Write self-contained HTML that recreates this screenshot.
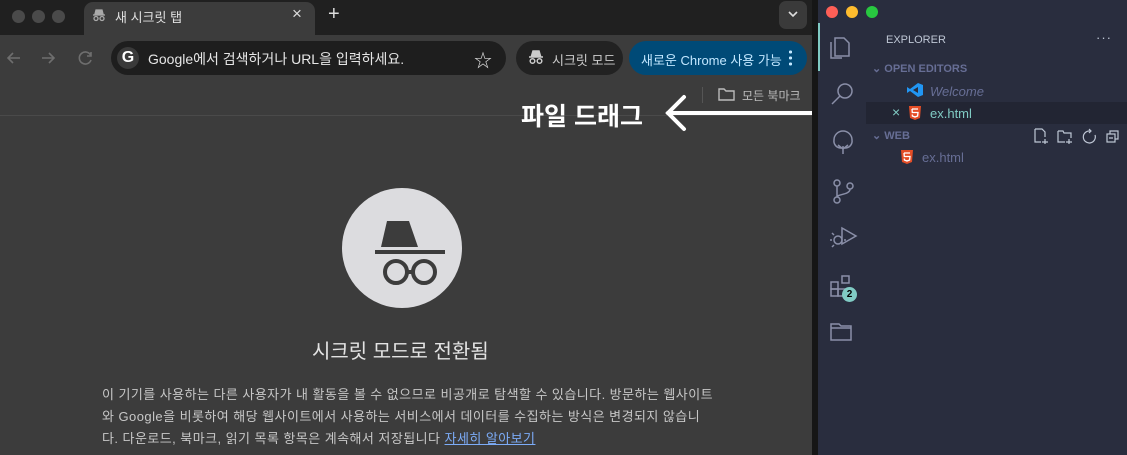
<!DOCTYPE html>
<html><head><meta charset="utf-8"><style>
*{margin:0;padding:0;box-sizing:border-box}
body{width:1127px;height:455px;overflow:hidden;background:#3c3c3c;font-family:"Liberation Sans","Noto Sans CJK KR",sans-serif;position:relative}
.abs{position:absolute}
.k{font-family:"Liberation Sans","Noto Sans CJK KR",sans-serif;white-space:nowrap}
</style></head><body>
<div class="abs" style="left:0;top:0;width:812px;height:35px;background:#202020"></div>
<div class="abs" style="left:12px;top:10px;width:13px;height:13px;border-radius:50%;background:#4a4a4a"></div>
<div class="abs" style="left:32px;top:10px;width:13px;height:13px;border-radius:50%;background:#4a4a4a"></div>
<div class="abs" style="left:52px;top:10px;width:13px;height:13px;border-radius:50%;background:#4a4a4a"></div>
<div class="abs" style="left:84px;top:2px;width:231px;height:34px;background:#3c3c3c;border-radius:9px 9px 0 0"></div>
<svg class="abs" style="left:92px;top:8px" width="14" height="14" viewBox="0 0 14 14" fill="none" stroke="#aaa" stroke-width="1.3"><path d="M4 2h6l1 4H3z" fill="#aaa"/><path d="M1 7h12"/><circle cx="4" cy="10.5" r="2"/><circle cx="10" cy="10.5" r="2"/></svg>
<div class="abs k" style="left:115px;top:7px;font-size:13px;color:#e0e0e0">새 시크릿 탭</div>
<div class="abs" style="left:292px;top:4px;font-size:17px;color:#ddd">×</div>
<div class="abs" style="left:328px;top:3px;font-size:20px;color:#ddd">+</div>
<div class="abs" style="left:779px;top:1px;width:28px;height:28px;border-radius:7px;background:#3a3a3a"></div>
<svg class="abs" style="left:787px;top:9px" width="12" height="10"><path d="M2 3l4 4 4-4" stroke="#ddd" stroke-width="1.6" fill="none"/></svg>
<svg class="abs" style="left:6px;top:50px" width="90" height="16" fill="none" stroke="#6e6e6e" stroke-width="1.6"><path d="M14 8H2M7 3L2 8l5 5"/><path d="M36 8h12M43 3l5 5-5 5"/><path d="M85 6a6 6 0 1 0 0 4M85 2v4h-4"/></svg>
<div class="abs" style="left:111px;top:41px;width:395px;height:34px;border-radius:17px;background:#1e1e1e"></div>
<div class="abs" style="left:117px;top:47px;width:22px;height:22px;border-radius:50%;background:#3a3a3a;color:#fff;font-weight:bold;font-size:16px;text-align:center;line-height:22px">G</div>
<div class="abs k" style="left:148px;top:49px;font-size:14px;color:#e6e6e6">Google에서 검색하거나 URL을 입력하세요.</div>
<div class="abs" style="left:474px;top:47px;font-size:18px;color:#ddd">☆</div>
<div class="abs" style="left:516px;top:41px;width:107px;height:34px;border-radius:17px;background:#222"></div>
<svg class="abs" style="left:528px;top:50px" width="16" height="15" fill="none" stroke="#ccc" stroke-width="1.5"><path d="M5 1h6l1.5 5h-9z" fill="#ccc"/><path d="M1 7h14"/><circle cx="4.5" cy="11" r="2.3"/><circle cx="11.5" cy="11" r="2.3"/></svg>
<div class="abs k" style="left:552px;top:50px;font-size:13px;color:#ccc">시크릿 모드</div>
<div class="abs" style="left:629px;top:41px;width:178px;height:34px;border-radius:17px;background:#004a77"></div>
<div class="abs k" style="left:641px;top:50px;font-size:13px;color:#c2e7ff">새로운 Chrome 사용 가능</div>
<div class="abs" style="left:789px;top:49px;width:3px;height:18px;background:radial-gradient(circle,#c2e7ff 1.5px,transparent 1.6px) 0 0/3px 6px"></div>
<div class="abs" style="left:702px;top:87px;width:1px;height:16px;background:#555"></div>
<svg class="abs" style="left:718px;top:87px" width="17" height="14" fill="none" stroke="#bbb" stroke-width="1.4"><path d="M1 2h5l2 2h8v9H1z"/></svg>
<div class="abs k" style="left:742px;top:87px;font-size:12px;color:#bbb">모든 북마크</div>
<div class="abs" style="left:0;top:115px;width:812px;height:1px;background:#4a4a4a"></div>
<div class="abs k" style="left:521px;top:97px;font-size:25px;font-weight:bold;color:#fff">파일 드래그</div>
<svg class="abs" style="left:660px;top:92px" width="205" height="40" fill="none" stroke="#fff" stroke-width="4" stroke-linecap="round"><path d="M8 21H203"/><path d="M24 5L8 21l16 16"/></svg>
<div class="abs" style="left:342px;top:188px;width:120px;height:120px;border-radius:50%;background:#dcdcdf"></div>
<svg class="abs" style="left:342px;top:188px" width="120" height="120"><path d="M45 33h22l9 26H39z" fill="#3c3c3c"/><rect x="33" y="62" width="70" height="4" fill="#3c3c3c"/><g fill="none" stroke="#3c3c3c" stroke-width="4"><circle cx="54" cy="84" r="11"/><circle cx="82" cy="84" r="11"/><path d="M65 84h6"/></g></svg>
<div class="abs k" style="left:312px;top:335px;font-size:20px;color:#e3e3e3">시크릿 모드로 전환됨</div>
<div class="abs k" style="left:102px;top:384px;font-size:13px;line-height:22px;letter-spacing:0.45px;color:#c7c7c7">이 기기를 사용하는 다른 사용자가 내 활동을 볼 수 없으므로 비공개로 탐색할 수 있습니다. 방문하는 웹사이트<br>와 Google을 비롯하여 해당 웹사이트에서 사용하는 서비스에서 데이터를 수집하는 방식은 변경되지 않습니<br>다. 다운로드, 북마크, 읽기 목록 항목은 계속해서 저장됩니다 <span style="color:#7cacf8;text-decoration:underline">자세히 알아보기</span></div>
<div class="abs" style="left:812px;top:0;width:6px;height:455px;background:#161616"></div>
<div class="abs" style="left:818px;top:0;width:309px;height:455px;background:#292d3e"></div>
<div class="abs" style="left:826px;top:6px;width:12px;height:12px;border-radius:50%;background:#fe5f57"></div>
<div class="abs" style="left:846px;top:6px;width:12px;height:12px;border-radius:50%;background:#febc2e"></div>
<div class="abs" style="left:866px;top:6px;width:12px;height:12px;border-radius:50%;background:#28c840"></div>
<div class="abs" style="left:818px;top:23px;width:2px;height:48px;background:#80cbc4"></div>
<svg class="abs" style="left:828px;top:30px" width="30" height="330" fill="none" stroke="#8a8fa8" stroke-width="1.5">
<path d="M7 8h9l5 5v13H7z"/><path d="M3 12v16h11"/>
<circle cx="17" cy="61" r="7"/><path d="M12 66l-8 8"/>
<path d="M15 124v-8M10 115l5 4 5-4M6 110a9 9 0 0 1 18 0a7 7 0 0 1-6 8h-6a7 7 0 0 1-6-8z"/>
<circle cx="9" cy="153" r="3"/><circle cx="9" cy="170" r="3"/><circle cx="22" cy="156" r="3"/><path d="M9 156v11M22 159c0 6-13 5-13 8"/>
<path d="M14 198l14 8-14 8z"/><circle cx="10" cy="210" r="4"/><path d="M4 210h-2M16 210h2M6 205l-2-2M6 215l-2 2"/>
<rect x="3" y="252" width="7" height="7"/><rect x="3" y="259" width="7" height="7"/><rect x="10" y="259" width="7" height="7"/><rect x="14" y="246" width="7" height="7"/>
<path d="M3 294h8l2 2h10v14H3zM3 298h20"/>
</svg>
<div class="abs" style="left:842px;top:287px;width:15px;height:15px;border-radius:50%;background:#80cbc4;color:#000;font-size:10px;font-weight:bold;text-align:center;line-height:15px">2</div>
<div class="abs" style="left:886px;top:34px;font-size:11px;color:#bfc7d5">EXPLORER</div>
<div class="abs" style="left:1096px;top:30px;font-size:13px;color:#bfc7d5;letter-spacing:1px">···</div>
<div class="abs" style="left:872px;top:62px;font-size:11px;font-weight:bold;color:#676e95">⌄ OPEN EDITORS</div>
<div class="abs" style="left:906px;top:82px;width:18px;height:16px"><svg width="18" height="16"><path d="M12 1l5 2v10l-5 2L4 9 1 11V5l3 2 8-6zM12 5L7 8l5 3z" fill="#2196f3"/></svg></div>
<div class="abs" style="left:930px;top:84px;font-size:13px;font-style:italic;color:#676e95">Welcome</div>
<div class="abs" style="left:866px;top:102px;width:261px;height:22px;background:#222533"></div>
<div class="abs" style="left:892px;top:104px;font-size:14px;color:#80cbc4">×</div>
<svg class="abs" style="left:909px;top:106px" width="12" height="14"><path d="M0 0h12l-1 12-5 2-5-2z" fill="#e44d26"/><path d="M3 3h6M3 3l.3 3.5H9L8.6 10 6 11l-2.6-1-.1-1.5" stroke="#fff" stroke-width="1.3" fill="none"/></svg>
<div class="abs" style="left:930px;top:106px;font-size:13px;color:#80cbc4">ex.html</div>
<div class="abs" style="left:872px;top:129px;font-size:11px;font-weight:bold;color:#676e95">⌄ WEB</div>
<svg class="abs" style="left:1034px;top:128px" width="86" height="16" fill="none" stroke="#bfc7d5" stroke-width="1.2"><path d="M1 1h7l3 3v5M1 1v13h6M11 11v5M8 14h6"/><path d="M24 3h5l1 2h7v5M24 3v11h7M35 11v5M32 14h6"/><path d="M56 3a6 6 0 1 0 5 4M55 1l2 2-2 2"/><rect x="73" y="6" width="8" height="8"/><path d="M76 6V3h8v8h-3M75 10h4"/></svg>
<svg class="abs" style="left:901px;top:150px" width="12" height="14"><path d="M0 0h12l-1 12-5 2-5-2z" fill="#e44d26"/><path d="M3 3h6M3 3l.3 3.5H9L8.6 10 6 11l-2.6-1-.1-1.5" stroke="#fff" stroke-width="1.3" fill="none"/></svg>
<div class="abs" style="left:922px;top:150px;font-size:13px;color:#676e95">ex.html</div>
</body></html>
